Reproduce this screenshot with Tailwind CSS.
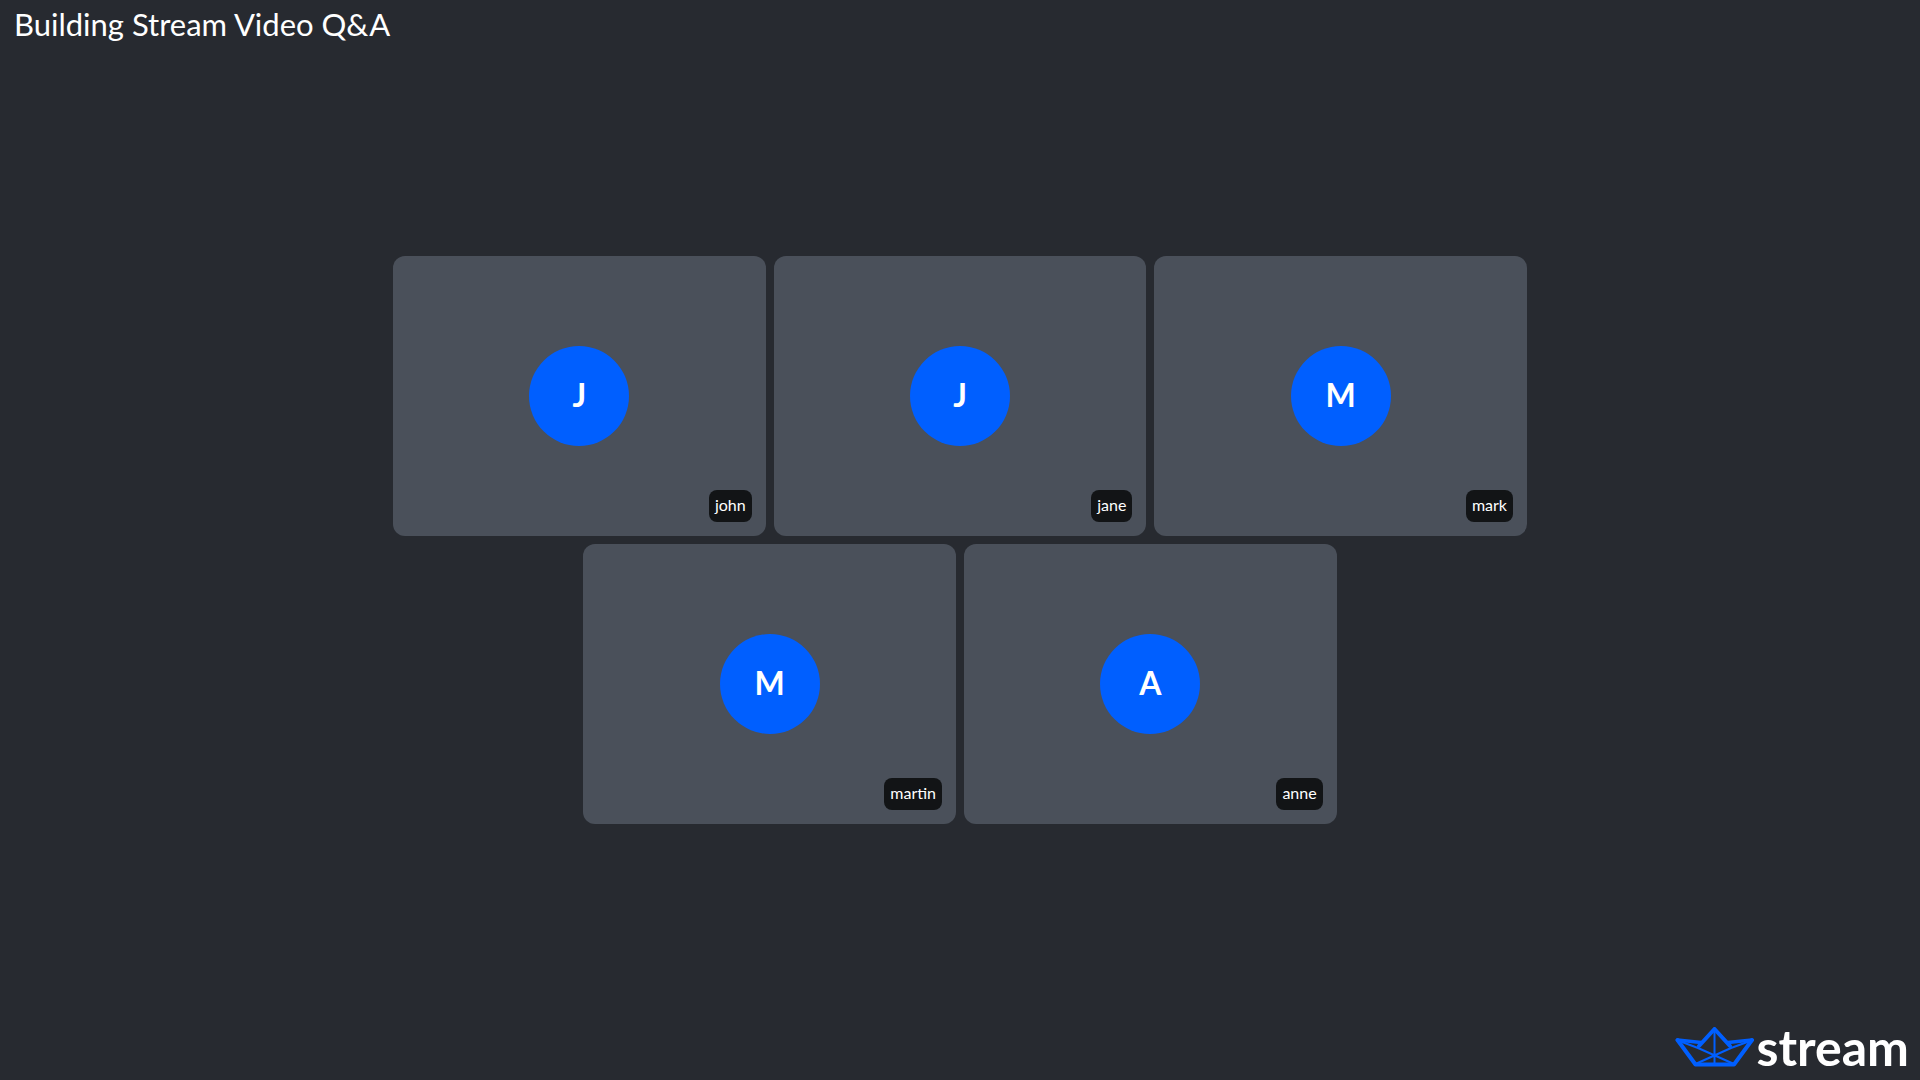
<!DOCTYPE html>
<html lang="en">
<head>
<meta charset="utf-8">
<title>Building Stream Video Q&amp;A</title>
<script src="https://cdn.jsdelivr.net/npm/@tailwindcss/browser@4"></script>
</head>
<body class="flex min-h-screen flex-col bg-[#272a30] font-[Lato,sans-serif] text-white">
  <header class="flex h-15 items-start px-3.5 pt-1">
    <h1 class="text-[31px] leading-10 font-normal">Building Stream Video Q&amp;A</h1>
  </header>

  <main class="flex flex-1 items-center justify-center">
    <ul class="flex w-full max-w-[1134px] flex-wrap justify-center gap-2">
      <li class="relative flex h-70 w-[calc((100%-16px)/3)] items-center justify-center rounded-xl bg-[#4a505a]">
        <div class="flex size-25 items-center justify-center rounded-full bg-[#005fff] pb-0.5 text-[32px] leading-10 font-bold">J</div>
        <span class="absolute right-3.5 bottom-3.5 rounded-lg bg-[#121416] px-1.5 pt-[3px] pb-[5px] text-base">john</span>
      </li>
      <li class="relative flex h-70 w-[calc((100%-16px)/3)] items-center justify-center rounded-xl bg-[#4a505a]">
        <div class="flex size-25 items-center justify-center rounded-full bg-[#005fff] pb-0.5 text-[32px] leading-10 font-bold">J</div>
        <span class="absolute right-3.5 bottom-3.5 rounded-lg bg-[#121416] px-1.5 pt-[3px] pb-[5px] text-base">jane</span>
      </li>
      <li class="relative flex h-70 w-[calc((100%-16px)/3)] items-center justify-center rounded-xl bg-[#4a505a]">
        <div class="flex size-25 items-center justify-center rounded-full bg-[#005fff] pb-0.5 text-[32px] leading-10 font-bold">M</div>
        <span class="absolute right-3.5 bottom-3.5 rounded-lg bg-[#121416] px-1.5 pt-[3px] pb-[5px] text-base">mark</span>
      </li>
      <li class="relative flex h-70 w-[calc((100%-16px)/3)] items-center justify-center rounded-xl bg-[#4a505a]">
        <div class="flex size-25 items-center justify-center rounded-full bg-[#005fff] pb-0.5 text-[32px] leading-10 font-bold">M</div>
        <span class="absolute right-3.5 bottom-3.5 rounded-lg bg-[#121416] px-1.5 pt-[3px] pb-[5px] text-base">martin</span>
      </li>
      <li class="relative flex h-70 w-[calc((100%-16px)/3)] items-center justify-center rounded-xl bg-[#4a505a]">
        <div class="flex size-25 items-center justify-center rounded-full bg-[#005fff] pb-0.5 text-[32px] leading-10 font-bold">A</div>
        <span class="absolute right-3.5 bottom-3.5 rounded-lg bg-[#121416] px-1.5 pt-[3px] pb-[5px] text-base">anne</span>
      </li>
    </ul>
  </main>

  <footer class="flex h-15 items-center justify-end gap-0.5 px-[11px] pb-1.5">
    <svg class="h-10 w-20" viewBox="0 0 80 40" fill="none" stroke="#005fff" stroke-linejoin="round" stroke-linecap="round" aria-hidden="true">
      <path stroke-width="4" d="M24 19 39.500 2 55 19"/>
      <path stroke-width="4" d="M2.500 13 20.500 37.500H59L77 13"/>
      <path stroke-width="3.500" d="M2.500 13 26 15.500M53 15.500 77 13"/>
      <path stroke-width="2" d="M3 13.500 23 21 59 37M76.500 13.500 56 21 20.500 37M39.500 3V37"/>
    </svg>
    <span class="text-[50px] leading-12 font-bold">stream</span>
  </footer>
</body>
</html>
